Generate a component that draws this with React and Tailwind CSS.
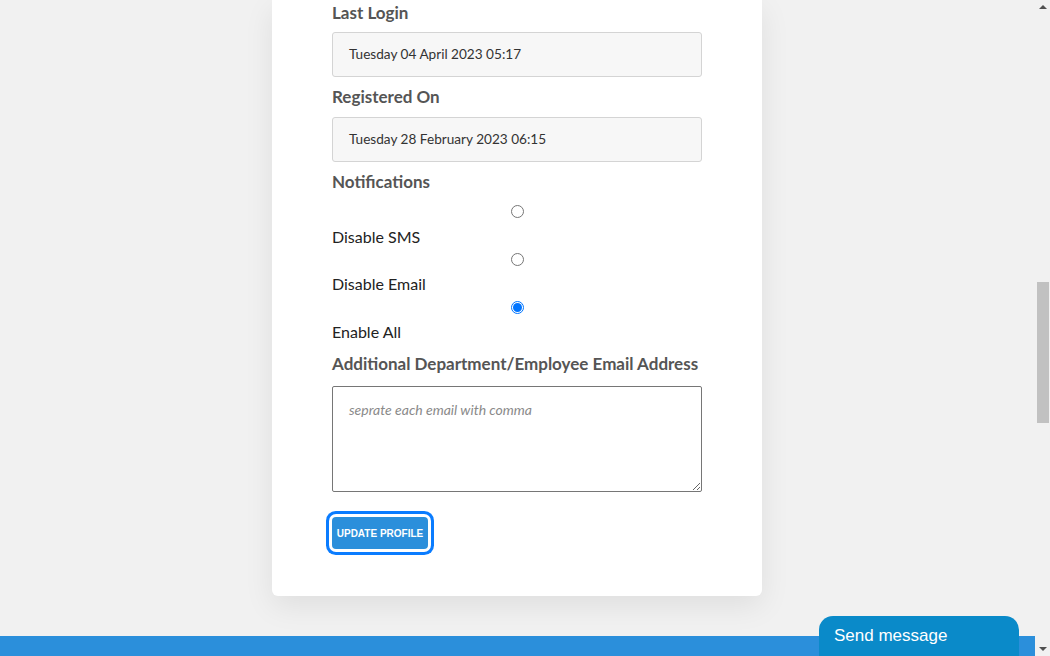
import React from 'react';

const Label = ({ children, className = '' }) => (
  <p className={`text-[17px] leading-6 font-bold text-[#555555] ${className}`}>{children}</p>
);

const ReadOnlyField = ({ value, className = '' }) => (
  <div className={`h-[45px] w-full flex items-center px-4 bg-[#f7f7f7] border border-[#d4d4d4] rounded-[3px] text-[13.6px] text-[#333333] ${className}`}>
    {value}
  </div>
);

const Radio = ({ checked, className = '' }) => (
  <div className={`flex justify-center h-[13px] ${className}`}>
    {checked ? (
      <span className="w-[13px] h-[13px] rounded-full border border-[#0075ff] flex items-center justify-center">
        <span className="w-[9px] h-[9px] rounded-full bg-[#0075ff]" />
      </span>
    ) : (
      <span className="w-[13px] h-[13px] rounded-full border border-[#767676] bg-white" />
    )}
  </div>
);

const App = () => {
  return (
    <div className="flex h-[656px] w-[1050px] overflow-hidden" style={{ fontFamily: 'Lato, "Open Sans", sans-serif' }}>
      {/* Page */}
      <div className="relative flex-1 flex flex-col bg-[#f1f1f1]">
        <div className="flex justify-center pr-[1px]">
          <div className="w-[490px] bg-white rounded-b-[6px] shadow-[0_10px_30px_rgba(0,0,0,0.08)] px-[60px] pt-[1px] pb-[47px]">
            <Label>Last Login</Label>
            <ReadOnlyField className="mt-[7px]" value="Tuesday 04 April 2023 05:17" />

            <Label className="mt-2">Registered On</Label>
            <ReadOnlyField className="mt-2" value="Tuesday 28 February 2023 06:15" />

            <Label className="mt-[8px]">Notifications</Label>

            <Radio className="mt-[11px]" />
            <p className="mt-[7px] text-[16px] leading-6 text-[#222222]">Disable SMS</p>
            <Radio className="mt-[4px]" />
            <p className="mt-[6px] text-[16px] leading-6 text-[#222222]">Disable Email</p>
            <Radio checked className="mt-[5px]" />
            <p className="mt-[6px] text-[16px] leading-6 text-[#222222]">Enable All</p>

            <Label className="mt-2">Additional Department/Employee Email Address</Label>
            <textarea
              className="mt-[10px] block w-full h-[106px] border border-[#767676] rounded-[2px] px-4 py-[12px] text-[14px] italic placeholder:text-[#8a8a8a] outline-none"
              placeholder="seprate each email with comma"
            />

            <button className="mt-[25px] h-[32px] w-[96px] rounded-[4px] bg-[#2b8fdb] text-white text-[10px] font-bold shadow-[0_0_0_3px_#ffffff,0_0_0_6px_#0a7cff]" style={{ fontFamily: '"Liberation Sans", Arial, sans-serif' }}>
              UPDATE PROFILE
            </button>
          </div>
        </div>

        <div className="mt-[40px] h-[20px] bg-[#2b8fdb]" />

        {/* Chat widget */}
        <div className="absolute bottom-0 right-[16px] w-[200px] h-[40px] bg-[#0a8ac9] rounded-t-[14px] px-[15px] pt-[7px] text-white text-[17px]" style={{ fontFamily: '"Liberation Sans", Arial, sans-serif' }}>
          Send message
        </div>
      </div>

      {/* Scrollbar */}
      <div className="w-[15px] flex flex-col items-center bg-[#f1f1f1]">
        <div className="mt-[5px] w-0 h-0 border-l-[4px] border-r-[4px] border-b-[4px] border-l-transparent border-r-transparent border-b-[#505050]" />
        <div className="mt-[273px] w-[12px] h-[141px] bg-[#c1c1c1]" />
        <div className="mt-auto mb-[5px] w-0 h-0 border-l-[4px] border-r-[4px] border-t-[4px] border-l-transparent border-r-transparent border-t-[#505050]" />
      </div>
    </div>
  );
};

export default App;
